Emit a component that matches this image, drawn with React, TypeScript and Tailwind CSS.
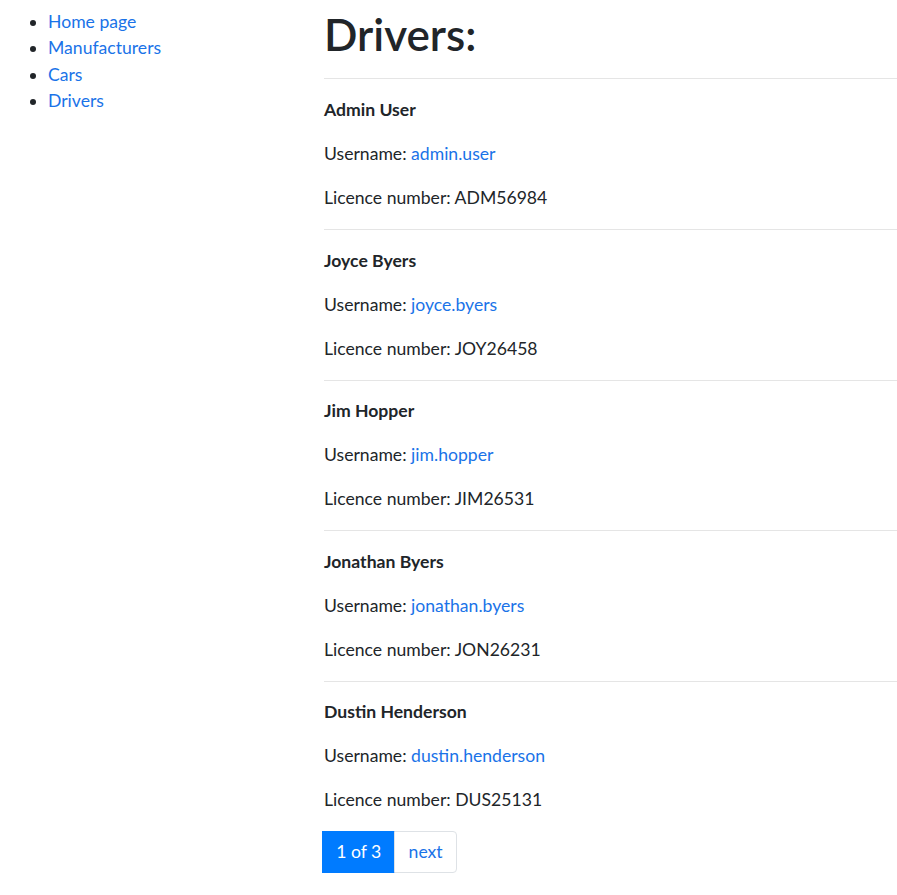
import React from 'react';

const drivers = [
  { name: 'Admin User', username: 'admin.user', licence: 'ADM56984' },
  { name: 'Joyce Byers', username: 'joyce.byers', licence: 'JOY26458' },
  { name: 'Jim Hopper', username: 'jim.hopper', licence: 'JIM26531' },
  { name: 'Jonathan Byers', username: 'jonathan.byers', licence: 'JON26231' },
  { name: 'Dustin Henderson', username: 'dustin.henderson', licence: 'DUS25131' },
];

const App = () => {
  return (
    <div className="min-h-screen bg-white text-[#212529] text-[17.6px] leading-[26.4px] font-['Lato','Segoe_UI',sans-serif] flex">
      {/* Sidebar */}
      <div className="w-[324px] shrink-0">
        <ul className="list-disc pl-[48px] pt-[9px]">
          <li><a href="#" className="text-[#1a73e8]">Home page</a></li>
          <li><a href="#" className="text-[#1a73e8]">Manufacturers</a></li>
          <li><a href="#" className="text-[#1a73e8]">Cars</a></li>
          <li><a href="#" className="text-[#1a73e8]">Drivers</a></li>
        </ul>
      </div>

      {/* Drivers list */}
      <div className="flex-1 min-w-0 pt-[8px]">
        <h1 className="text-[44px] leading-[52.8px] font-semibold mb-[8.8px]">Drivers:</h1>
        {drivers.map((d) => (
          <div key={d.username}>
            <hr className="border-t border-[#e5e5e5] my-[17.6px]" />
            <p className="font-bold mb-[17.6px]">{d.name}</p>
            <p className="mb-[17.6px]">
              Username: <a href="#" className="text-[#1a73e8]">{d.username}</a>
            </p>
            <p className="mb-[17.6px]">Licence number: {d.licence}</p>
          </div>
        ))}

        {/* Pagination */}
        <div className="flex -ml-[2px]">
          <span className="bg-[#007bff] border border-[#007bff] text-white px-[13.2px] py-[8.8px] leading-[22px]">1 of 3</span>
          <a href="#" className="border border-[#dee2e6] text-[#1a73e8] px-[13.2px] py-[8.8px] leading-[22px] rounded-r-[4px] -ml-px">next</a>
        </div>
      </div>
    </div>
  );
};

export default App;
